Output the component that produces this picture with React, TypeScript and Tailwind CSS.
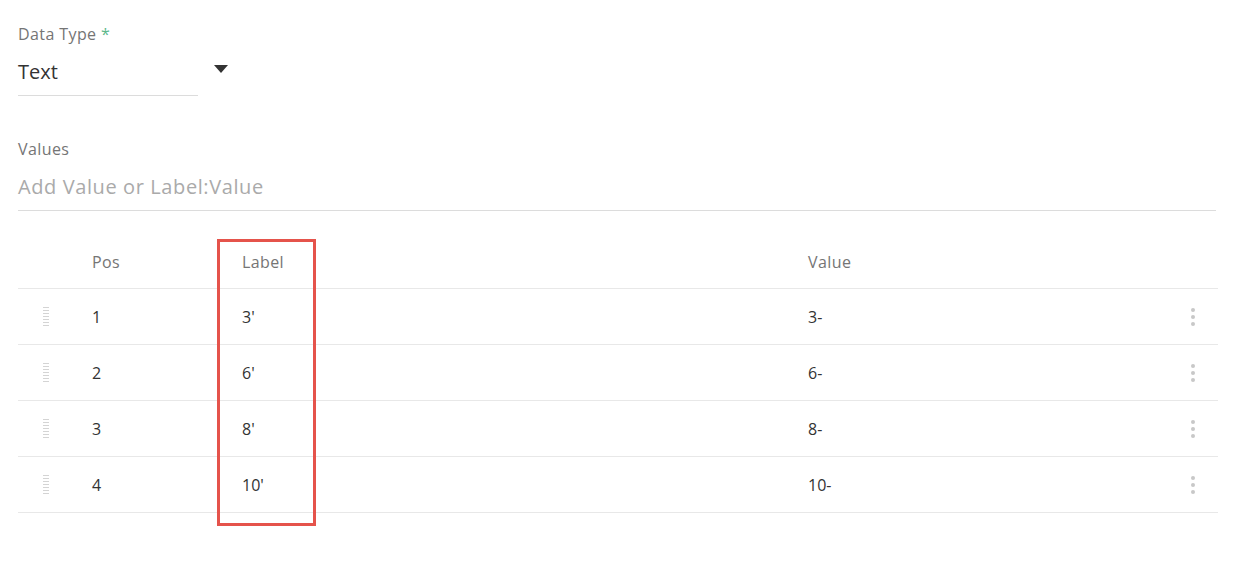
const ROWS = [
  { pos: 1, label: "3'", value: '3-' },
  { pos: 2, label: "6'", value: '6-' },
  { pos: 3, label: "8'", value: '8-' },
  { pos: 4, label: "10'", value: '10-' },
];

function DragHandle() {
  return (
    <div className="flex w-[6px] flex-col gap-[2px]">
      {[0, 1, 2, 3, 4, 5, 6].map((i) => (
        <span key={i} className="block h-px w-full bg-[#d4d4d4]" />
      ))}
    </div>
  );
}

function MoreDots() {
  return (
    <div className="flex w-[4px] flex-col gap-[3px]">
      {[0, 1, 2].map((i) => (
        <span key={i} className="block h-[4px] w-[4px] rounded-full bg-[#c8c8c8]" />
      ))}
    </div>
  );
}

export default function App() {
  return (
    <div className="h-[562px] w-[1248px] bg-white px-[18px] pt-[24px] font-['Open_Sans','Liberation_Sans',sans-serif] text-[#333]">
      <div className="text-[16px] leading-5 tracking-[0.4px] text-[#757575]">
        Data Type <span className="text-[#5cb88c]">*</span>
      </div>
      <div className="flex items-center">
        <div className="flex h-[52px] w-[180px] items-center border-b border-[#dcdcdc] pt-[4px] text-[20px] text-[#333]">
          Text
        </div>
        <svg width="14" height="8" viewBox="0 0 14 8" className="mb-[3px] ml-[16px]">
          <path d="M0 0H14L7 8Z" fill="#333" />
        </svg>
      </div>

      <div className="mt-[43px] text-[16px] leading-5 tracking-[0.4px] text-[#757575]">Values</div>
      <div className="flex h-[52px] w-[1198px] items-center border-b border-[#dcdcdc] pt-[5px] text-[20px] tracking-[0.6px] text-[#aaa]">
        Add Value or Label:Value
      </div>

      <div className="relative mt-[28px] w-[1200px]">
        <div className="flex h-[50px] items-center border-b border-[#e8e8e8] pb-[4px] text-[16px] tracking-[0.4px] text-[#757575]">
          <div className="w-[74px]" />
          <div className="w-[150px]">Pos</div>
          <div className="w-[566px]">Label</div>
          <div className="flex-1">Value</div>
        </div>
        {ROWS.map((r) => (
          <div
            key={r.pos}
            className="flex h-[56px] items-center border-b border-[#e8e8e8] text-[16px] text-[#333]"
          >
            <div className="w-[74px] pl-[25px]">
              <DragHandle />
            </div>
            <div className="w-[150px]">{r.pos}</div>
            <div className="w-[566px]">{r.label}</div>
            <div className="flex-1">{r.value}</div>
            <div className="w-[50px] pl-[23px]">
              <MoreDots />
            </div>
          </div>
        ))}
        <div className="pointer-events-none absolute left-[199px] top-0 h-[287px] w-[99px] border-[3px] border-[#e5534b]" />
      </div>
    </div>
  );
}
